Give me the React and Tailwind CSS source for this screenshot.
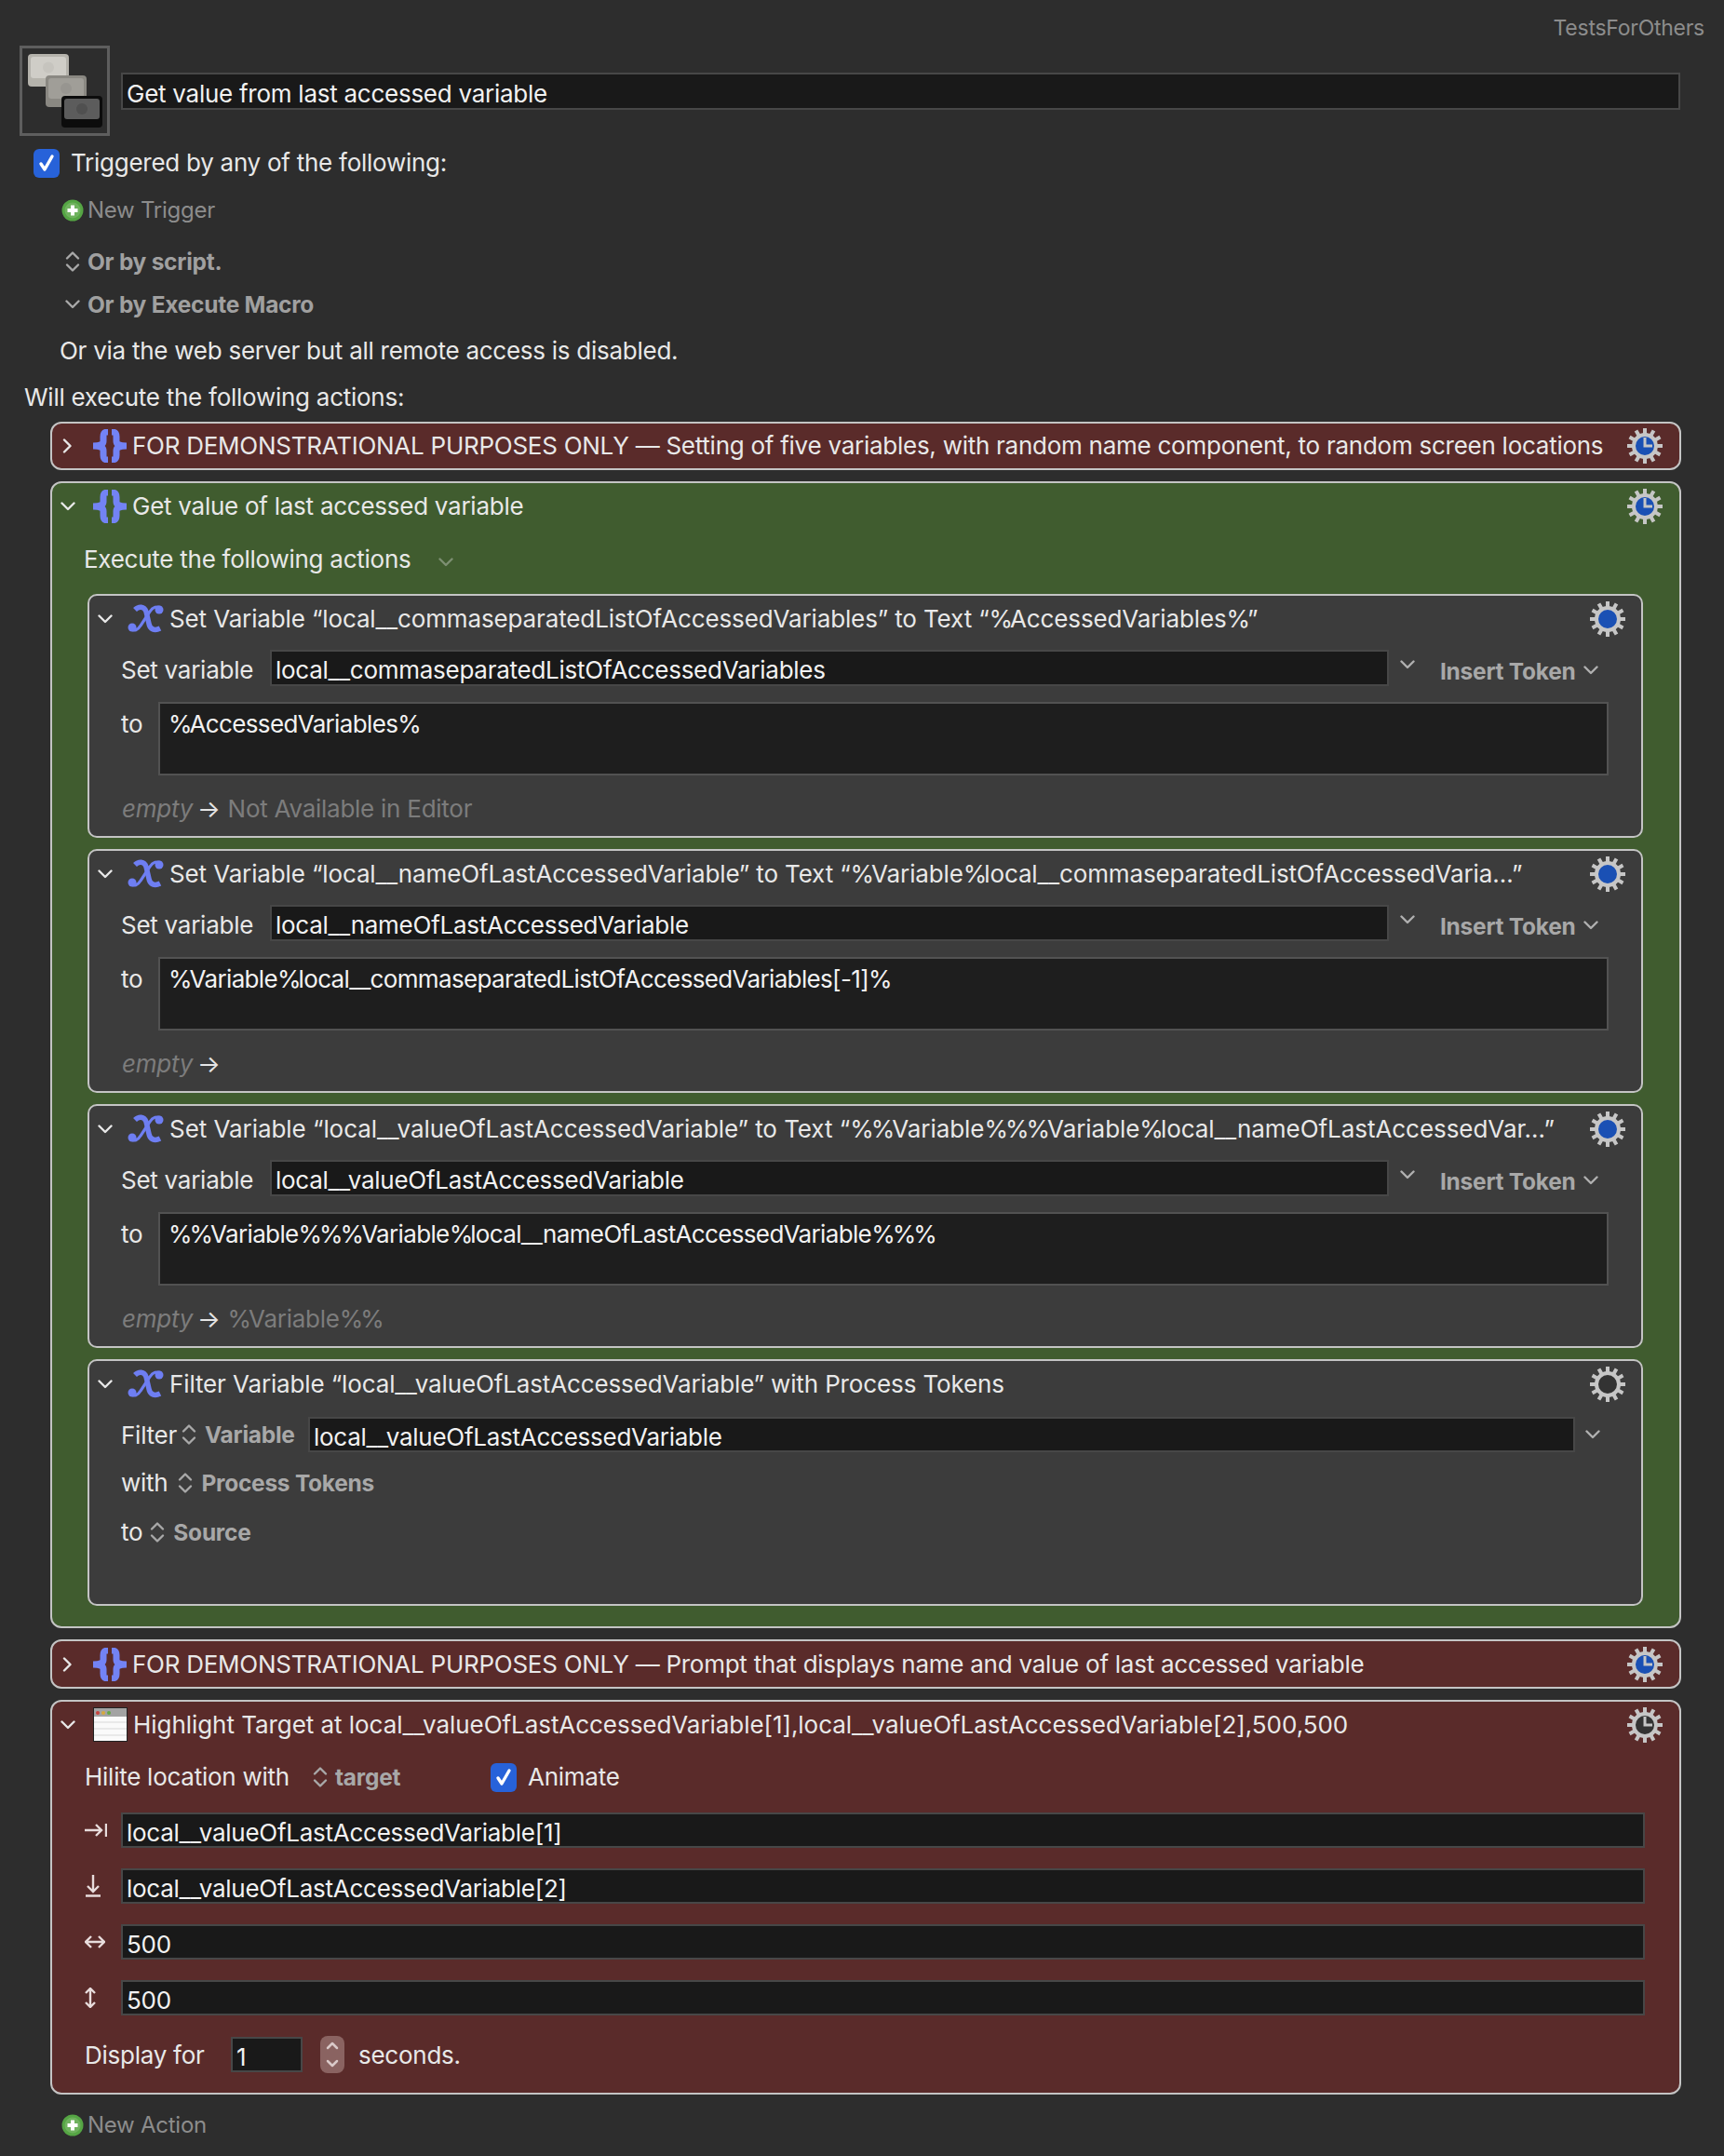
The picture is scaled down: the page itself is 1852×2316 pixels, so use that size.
import React from "react";

const Chevron = ({ dir = "down", className = "" }) => (
  <svg width="16" height="16" viewBox="0 0 16 16" fill="none" stroke="currentColor" strokeWidth="2.4" strokeLinecap="round" strokeLinejoin="round" className={`shrink-0 ${className}`}>
    {dir === "down" ? <path d="M1.5 4.5l6.5 6.5 6.5-6.5" /> : <path d="M4 1.5l6.5 6.5L4 14.5" />}
  </svg>
);

const Stepper = () => (
  <svg width="16" height="24" viewBox="0 0 16 24" fill="none" stroke="#a9a9a9" strokeWidth="2.4" strokeLinecap="round" strokeLinejoin="round" className="shrink-0">
    <path d="M2 8.5l6-6 6 6" />
    <path d="M2 15.5l6 6 6-6" />
  </svg>
);

const Gear = ({ blue = false, clock = false }) => (
  <svg width="38" height="38" viewBox="0 0 38 38" className="shrink-0">
    {[0, 30, 60, 90, 120, 150, 180, 210, 240, 270, 300, 330].map((a) => (
      <rect key={a} x="17" y="0" width="4" height="10" fill="#c6c6c6" transform={`rotate(${a} 19 19)`} />
    ))}
    <circle cx="19" cy="19" r="12" fill={blue ? "#1a50b4" : "#333333"} stroke="#c6c6c6" strokeWidth="4" />
    {clock && <path d="M19 10v9h8" fill="none" stroke="#c6c6c6" strokeWidth="3" />}
  </svg>
);

const Braces = () => (
  <svg width="36" height="36" viewBox="0 0 36 36" fill="none" stroke="#7383f5" strokeWidth="7" className="shrink-0">
    <path d="M16 3c-4 0-5 1-5 5v5c0 3-3 5-11 5 8 0 11 2 11 5v5c0 4 1 5 5 5" />
    <path d="M20 3c4 0 5 1 5 5v5c0 3 3 5 11 5-8 0-11 2-11 5v5c0 4-1 5-5 5" />
  </svg>
);

const ScriptX = () => (
  <svg width="39" height="32" viewBox="0 0 39 32" fill="none" stroke="#6e7ef2" className="shrink-0">
    <path d="M8 6c4-4 10-4 12 2l3 13c1 6 6 8 12 5" strokeWidth="5.5" />
    <path d="M36 4c-4-2-9-1-12 4L14 23c-3 5-7 6-10 4" strokeWidth="3.2" />
    <circle cx="5" cy="25" r="4.5" fill="#6e7ef2" stroke="none" />
    <circle cx="34" cy="6" r="4.5" fill="#6e7ef2" stroke="none" />
  </svg>
);

const WindowIcon = () => (
  <svg width="37" height="37" viewBox="0 0 37 37" className="shrink-0">
    <rect x="0.5" y="0.5" width="36" height="36" fill="#fafafa" stroke="#222222" />
    <rect x="1" y="1" width="35" height="9" fill="#a3a3a3" />
    <circle cx="5" cy="6" r="2" fill="#c9413c" />
    <circle cx="11" cy="6" r="2" fill="#d6a83c" />
    <circle cx="17" cy="6" r="2" fill="#62a844" />
    <path d="M1 16h35M1 23h35M1 30h35" stroke="#d8d8d8" />
  </svg>
);

const Key = ({ x, y, w, h, base, face, blob }) => (
  <g>
    <rect x={x} y={y} width={w} height={h} rx="4" fill={base} />
    <rect x={x + 3} y={y + 3} width={w - 6} height={h - 12} rx="3" fill={face} />
    <circle cx={x + w / 2} cy={y + h / 2 - 3} r="6" fill={blob} />
  </g>
);

const MacroIcon = () => (
  <svg width="80" height="79" viewBox="0 0 80 79">
    <Key x={0} y={0} w={44} h={35} base="#b5b3ac" face="#cfcdc7" blob="#c6c4be" />
    <Key x={19} y={23} w={44} h={34} base="#8a8882" face="#a09e98" blob="#979590" />
    <Key x={36} y={45} w={44} h={34} base="#0c0c0c" face="#5c5c5c" blob="#505050" />
  </svg>
);

const Plus = () => (
  <svg width="24" height="24" viewBox="0 0 24 24" className="shrink-0">
    <circle cx="12" cy="12" r="11.5" fill="#55a544" />
    <circle cx="12" cy="12" r="8.5" fill="#6fb25e" />
    <path d="M12 6.5v11M6.5 12h11" stroke="#ffffff" strokeWidth="4" />
  </svg>
);

const Check = () => (
  <div className="w-[28px] h-[31px] rounded-[6px] bg-[#2762d9] flex items-center justify-center shrink-0">
    <svg width="20" height="22" viewBox="0 0 20 22" fill="none" stroke="#ffffff" strokeWidth="3.4" strokeLinecap="round" strokeLinejoin="round">
      <path d="M4 12l4 6 8-14" />
    </svg>
  </div>
);

// the % in the original font is much narrower than Inter's
const Pct = ({ text }) =>
  text.split(/(%)/).map((part, i) =>
    part === "%" ? (
      <span key={i} className="tracking-[-3px]">%</span>
    ) : (
      part
    )
  );

const Field = ({ children, className = "" }) => (
  <div className={`h-[38px] bg-[#191919] border-2 border-white/20 pl-1 pt-[5px] flex items-center text-[#f2f2f2] whitespace-nowrap ${className}`}>
    {children}
  </div>
);

const Header = ({ open, icon, title, gear, inner, titleClass = "" }) => (
  <div className={`flex items-center shrink-0 h-[49px] pl-[9px] ${inner ? "pr-[17px]" : "pr-[18px]"}`}>
    <Chevron dir={open ? "down" : "right"} />
    <div className={`flex justify-center ${inner ? "ml-[16px] mr-[6px]" : "ml-[19px] mr-[6px]"}`}>{icon}</div>
    <div className={`flex-1 min-w-0 whitespace-nowrap ${titleClass}`}>{title}</div>
    {gear}
  </div>
);

const cards = [
  {
    title: "Set Variable “local__commaseparatedListOfAccessedVariables” to Text “%AccessedVariables%”",
    titleClass: "tracking-[-0.005em]",
    name: "local__commaseparatedListOfAccessedVariables",
    value: "%AccessedVariables%",
    result: "Not Available in Editor",
  },
  {
    title: "Set Variable “local__nameOfLastAccessedVariable” to Text “%Variable%local__commaseparatedListOfAccessedVaria…”",
    titleClass: "tracking-[-0.005em]",
    name: "local__nameOfLastAccessedVariable",
    value: "%Variable%local__commaseparatedListOfAccessedVariables[-1]%",
    result: "",
  },
  {
    title: "Set Variable “local__valueOfLastAccessedVariable” to Text “%%Variable%%%Variable%local__nameOfLastAccessedVar…”",
    titleClass: "tracking-[-0.002em]",
    name: "local__valueOfLastAccessedVariable",
    value: "%%Variable%%%Variable%local__nameOfLastAccessedVariable%%%",
    result: "%Variable%%",
  },
];

const SetVariableCard = ({ title, titleClass, name, value, result }) => (
  <div className="h-[262px] bg-[#3c3c3c] border-2 border-[#c4c4c4] rounded-[10px]">
    <Header inner open icon={<ScriptX />} title={<Pct text={title} />} titleClass={titleClass} gear={<Gear blue />} />
    <div className="mt-[9px] pl-[34px] flex items-center h-[39px]">
      <span className="w-[160px] pt-[5px]">Set variable</span>
      <Field className="w-[1202px] h-[39px]">{name}</Field>
      <Chevron className="ml-[12px] -mt-[8px] text-[#b0b0b0]" />
      <span className="ml-[27px] pt-[6px] text-[24.5px] font-bold text-[#a8a8a8] whitespace-nowrap">Insert Token</span>
      <Chevron className="ml-[8px] mt-[5px] text-[#b0b0b0]" />
    </div>
    <div className="mt-[17px] pl-[34px] flex items-start">
      <span className="w-[40px] mt-[6px]">to</span>
      <div className="w-[1558px] h-[79px] bg-[#1e1e1e] border-2 border-[#525252] pl-[9px] pt-[4px] text-[#f2f2f2] tracking-[-0.025em]">
        <Pct text={value} />
      </div>
    </div>
    <div className="mt-[22px] pl-[35px] flex items-center h-[28px]">
      <span className="italic text-[#7c7c7c]">empty</span>
      <span className="ml-[5px] text-[#e6e6e6]">→</span>
      <span className="ml-[8px] text-[#7c7c7c]"><Pct text={result} /></span>
    </div>
  </div>
);

const signs = [
  <svg key="tab" width="24" height="20" viewBox="0 0 24 20" fill="none" stroke="#e8dcdc" strokeWidth="2.4"><path d="M0 10h18M12 4l6 6-6 6M23 3v14" /></svg>,
  <svg key="down" width="18" height="24" viewBox="0 0 18 24" fill="none" stroke="#e8dcdc" strokeWidth="2.4"><path d="M9 0v18M3 12l6 6 6-6M1 22.5h16" /></svg>,
  <svg key="horizontal" width="22" height="16" viewBox="0 0 22 16" fill="none" stroke="#e8dcdc" strokeWidth="2.4"><path d="M1 8h20M7 2L1 8l6 6M15 2l6 6-6 6" /></svg>,
  <svg key="vertical" width="12" height="22" viewBox="0 0 12 22" fill="none" stroke="#e8dcdc" strokeWidth="2.4"><path d="M6 1v20M1 6l5-5 5 5M1 16l5 5 5-5" /></svg>,
];

export default function App() {
  return (
    <div className="min-h-[2316px] bg-[#2d2d2d] font-['Inter',sans-serif] text-[26px] leading-[36px] tracking-[-0.01em] text-[#e8e8e8]">
      <div className="h-[49px] pt-[11px] pr-[21px] text-right text-[23px] leading-[38px] text-[#8c8c8c]">TestsForOthers</div>

      <div className="flex pl-[21px] pr-[47px]">
        <div className="w-[97px] h-[97px] border-[3px] border-[#5e5e5e] flex items-center justify-center shrink-0">
          <MacroIcon />
        </div>
        <Field className="flex-1 ml-[12px] mt-[29px] h-[40px]">Get value from last accessed variable</Field>
      </div>

      <div className="h-[58px] pl-[36px] flex items-center">
        <Check />
        <span className="ml-[12px]">Triggered by any of the following:</span>
      </div>
      <div className="h-[44px] pl-[66px] flex items-center text-[24px] text-[#8c8c8c]">
        <Plus />
        <span className="ml-[4px]">New Trigger</span>
      </div>
      <div className="h-[66px] pl-[70px] flex items-center text-[24.5px] font-bold text-[#a0a0a0]">
        <Stepper />
        <span className="ml-[8px]">Or by script.</span>
      </div>
      <div className="h-[26px] pl-[70px] flex items-center text-[24.5px] font-bold text-[#a0a0a0]">
        <Chevron className="text-[#a9a9a9]" />
        <span className="ml-[8px]">Or by Execute Macro</span>
      </div>
      <div className="h-[74px] pl-[64px] flex items-center">Or via the web server but all remote access is disabled.</div>
      <div className="h-[26px] pl-[26px] flex items-center">Will execute the following actions:</div>

      <div className="mt-[13px] pl-[54px] pr-[46px] flex flex-col gap-[12px]">
        <div className="h-[52px] bg-[#5a2b2a] border-2 border-[#c4c4c4] rounded-[12px] flex flex-col justify-center">
          <Header
            icon={<Braces />}
            title="FOR DEMONSTRATIONAL PURPOSES ONLY — Setting of five variables, with random name component, to random screen locations"
            gear={<Gear blue clock />}
          />
        </div>

        <div className="h-[1232px] bg-[#405c2f] border-2 border-[#c4c4c4] rounded-[12px]">
          <Header open icon={<Braces />} title="Get value of last accessed variable" gear={<Gear blue clock />} />
          <div className="h-[66px] pl-[34px] flex items-center">
            <span>Execute the following actions</span>
            <Chevron className="ml-[30px] mt-[6px] text-[#7d8f72]" />
          </div>
          <div className="mt-[4px] pl-[38px] pr-[39px] flex flex-col gap-[12px]">
            {cards.map((card) => (
              <SetVariableCard key={card.name} {...card} />
            ))}
            <div className="h-[265px] bg-[#3c3c3c] border-2 border-[#c4c4c4] rounded-[10px]">
              <Header inner open icon={<ScriptX />} title="Filter Variable “local__valueOfLastAccessedVariable” with Process Tokens" titleClass="tracking-[-0.005em]" gear={<Gear />} />
              <div className="mt-[11px] pl-[34px] flex items-center">
                <span className="pt-[2px]">Filter</span>
                <span className="ml-[5px]"><Stepper /></span>
                <span className="ml-[9px] w-[111px] text-[24.5px] font-bold text-[#a8a8a8]">Variable</span>
                <Field className="w-[1361px]">local__valueOfLastAccessedVariable</Field>
                <Chevron className="ml-[11px] text-[#b0b0b0]" />
              </div>
              <div className="mt-[19px] pl-[34px] h-[28px] flex items-center">
                <span>with</span>
                <span className="ml-[11px]"><Stepper /></span>
                <span className="ml-[9px] text-[24.5px] font-bold text-[#a8a8a8]">Process Tokens</span>
              </div>
              <div className="mt-[25px] pl-[34px] h-[28px] flex items-center">
                <span>to</span>
                <span className="ml-[8px]"><Stepper /></span>
                <span className="ml-[9px] text-[24.5px] font-bold text-[#a8a8a8]">Source</span>
              </div>
            </div>
          </div>
        </div>

        <div className="h-[53px] bg-[#5a2b2a] border-2 border-[#c4c4c4] rounded-[12px] flex flex-col justify-center">
          <Header
            icon={<Braces />}
            title="FOR DEMONSTRATIONAL PURPOSES ONLY — Prompt that displays name and value of last accessed variable"
            gear={<Gear blue clock />}
          />
        </div>

        <div className="h-[424px] bg-[#5a2b2a] border-2 border-[#c4c4c4] rounded-[12px]">
          <Header
            open
            icon={<WindowIcon />}
            title="Highlight Target at local__valueOfLastAccessedVariable[1],local__valueOfLastAccessedVariable[2],500,500"
            titleClass="tracking-[-0.002em]"
            gear={<Gear clock />}
          />
          <div className="h-[64px] pl-[35px] flex items-center">
            <span className="w-[245px]">Hilite location with</span>
            <Stepper />
            <span className="ml-[8px] w-[167px] text-[24.5px] font-bold text-[#a8a8a8]">target</span>
            <Check />
            <span className="ml-[12px]">Animate</span>
          </div>
          <div className="mt-[6px] pl-[35px] pr-[37px] flex flex-col gap-[22px]">
            {["local__valueOfLastAccessedVariable[1]", "local__valueOfLastAccessedVariable[2]", "500", "500"].map((value, i) => (
              <div key={i} className="flex items-center">
                <span className="w-[39px] flex">{signs[i]}</span>
                <Field className="flex-1">{value}</Field>
              </div>
            ))}
          </div>
          <div className="mt-[22px] pl-[35px] flex items-center">
            <span className="w-[157px] pt-[2px]">Display for</span>
            <Field className="w-[77px]">1</Field>
            <div className="ml-[19px] w-[26px] h-[40px] rounded-[8px] bg-[#8a6361] flex items-center justify-center">
              <svg width="16" height="34" viewBox="0 0 16 34" fill="none" stroke="#d9c9c8" strokeWidth="2.5" strokeLinecap="round" strokeLinejoin="round">
                <path d="M3 10l5-5 5 5" />
                <path d="M3 24l5 5 5-5" />
              </svg>
            </div>
            <span className="ml-[15px] pt-[2px]">seconds.</span>
          </div>
        </div>
      </div>

      <div className="mt-[20px] h-[26px] pl-[66px] flex items-center text-[24px] text-[#8c8c8c]">
        <Plus />
        <span className="ml-[4px]">New Action</span>
      </div>
    </div>
  );
}
